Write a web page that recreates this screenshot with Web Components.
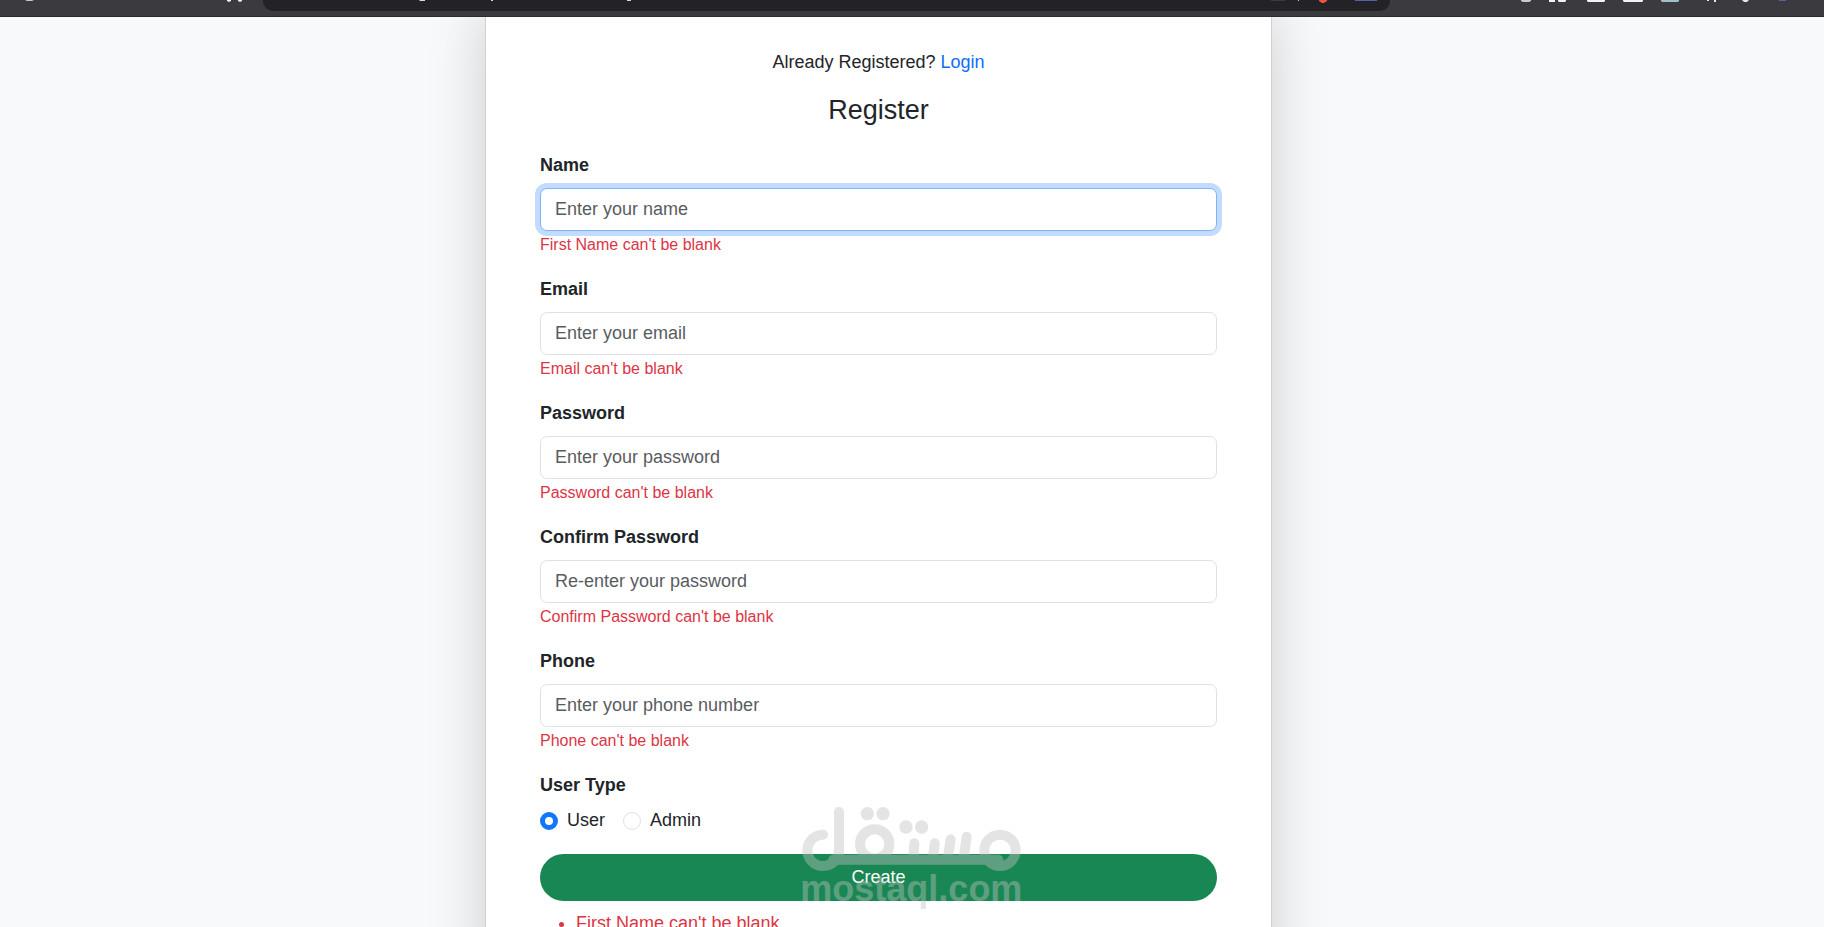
<!DOCTYPE html>
<html lang="en">
<head>
<meta charset="utf-8">
<title>Register</title>
<style>
  body {
    margin: 0;
    height: 100vh;
    overflow: hidden;
    background: #f8f9fb;
    color: #212529;
    font: 18px/27px "Liberation Sans", Arial, sans-serif;
  }
</style>
</head>
<body>
<browser-bar></browser-bar>
<register-page></register-page>

<script>
class BrowserBar extends HTMLElement {
  constructor() {
    super();
    this.attachShadow({ mode: 'open' });
  }

  connectedCallback() {
    this.shadowRoot.innerHTML = `
      <style>
        :host {
          display: flex;
          position: relative;
          z-index: 1;
          height: 16px;
          background: #3b3a3f;
          border-bottom: 1px solid #2b2a30;
        }
        svg { display: block; height: 11px; }
        .nav { width: 263px; }
        .address {
          display: flex;
          justify-content: space-between;
          flex: 1;
          height: 11px;
          background: #232227;
          border-radius: 0 0 10px 10px;
        }
        .tools { width: 434px; }
      </style>
      <svg class="nav" viewBox="0 0 263 11">
        <path d="M25 0h9l-2 1h-5z" fill="#b9cdd4"/>
        <path d="M227 0h4v1l-2 1-2-1zM238 0h4v1l-2 1-2-1z" fill="#f2f2f2"/>
      </svg>
      <div class="address">
        <svg width="380" viewBox="263 0 380 11">
          <path d="M419 0h6v1h-5zM491 0h2v1h-2zM627 0h4v1h-4z" fill="#d5d9dc"/>
        </svg>
        <svg width="130" viewBox="1260 0 130 11">
          <path d="M1271 0h14v1h-14z" fill="#3b3a3f"/>
          <path d="M1298 0h1v1h-1z" fill="#c8c8cc"/>
          <path d="M1319 0h8v1l-3 2h-2l-3-2z" fill="#f0553b"/>
          <path d="M1355 0h22v1h-22z" fill="#5661a8"/>
        </svg>
      </div>
      <svg class="tools" viewBox="1390 0 434 11">
        <path d="M1521 0h10v1l-2 1h-6l-2-1z" fill="#c9cbd4"/>
        <path d="M1549 0h6v2h-6zM1558 0h8v1l-1 1h-6l-1-1zM1587 0h18v1l-1 1h-16l-1-1zM1623 0h20v1l-1 1h-18l-1-1z" fill="#f1f2f3"/>
        <path d="M1661 0h18v1l-1 1h-16l-1-1z" fill="#9fbfca"/>
        <path d="M1707 0h2v1h-2zM1714 0h2v2h-2zM1742 0h7l-2 2h-3z" fill="#e3e6e8"/>
        <path d="M1779 0h7v1h-7z" fill="#605da4"/>
      </svg>
    `;
  }
}

class FormField extends HTMLElement {
  constructor() {
    super();
    this.attachShadow({ mode: 'open' });
  }

  connectedCallback() {
    const label = this.getAttribute('label');
    const type = this.getAttribute('type') || 'text';
    const placeholder = this.getAttribute('placeholder');
    const active = this.hasAttribute('active') ? 'active' : '';

    this.shadowRoot.innerHTML = `
      <style>
        :host { display: block; margin-bottom: 19px; }
        label { display: block; margin-bottom: 9px; font-weight: bold; }
        input {
          display: block;
          box-sizing: border-box;
          width: 100%;
          height: 43px;
          padding: 0 14px;
          border: 1px solid #dee2e6;
          border-radius: 7px;
          background: #fff;
          color: inherit;
          font: inherit;
          outline: 0;
        }
        input::placeholder { color: #595c5f; opacity: 1; }
        input.active, input:focus {
          border-color: #7fb4fb;
          box-shadow: 0 0 0 5px rgba(13, 110, 253, .25);
        }
        .error { margin-top: 2px; font-size: 16px; line-height: 24px; color: #dc3545; }
      </style>
      <label for="field">${label}</label>
      <input id="field" class="${active}" type="${type}" placeholder="${placeholder}">
      <div class="error"><slot></slot></div>
    `;
  }
}

class RadioGroup extends HTMLElement {
  constructor() {
    super();
    this.attachShadow({ mode: 'open' });
  }

  connectedCallback() {
    const options = this.getAttribute('options').split(',');
    const value = this.getAttribute('value');

    this.shadowRoot.innerHTML = `
      <style>
        :host { display: block; margin-bottom: 20px; }
        fieldset { margin: 0; padding: 0; border: 0; min-width: 0; }
        legend { padding: 0; margin-bottom: 8px; font-weight: bold; }
        .options { display: flex; gap: 18px; }
        label { display: flex; align-items: center; gap: 9px; }
        input {
          appearance: none;
          box-sizing: border-box;
          width: 18px;
          height: 18px;
          margin: 0;
          border: 1px solid #dee2e6;
          border-radius: 50%;
          background: #fff;
        }
        input:checked { border: 5px solid #1374fd; }
      </style>
      <fieldset>
        <legend>${this.getAttribute('label')}</legend>
        <div class="options">
          ${options
            .map(
              (option) => `
              <label>
                <input type="radio" name="type" value="${option}" ${option === value ? 'checked' : ''}>
                ${option}
              </label>
            `
            )
            .join('')}
        </div>
      </fieldset>
    `;
  }
}

class SubmitButton extends HTMLElement {
  constructor() {
    super();
    this.attachShadow({ mode: 'open' });
  }

  connectedCallback() {
    this.shadowRoot.innerHTML = `
      <style>
        :host { display: block; }
        button {
          display: block;
          width: 100%;
          height: 47px;
          padding: 0;
          border: 0;
          border-radius: 24px;
          background: #198754;
          color: #fff;
          font: inherit;
        }
      </style>
      <button type="button"><slot></slot></button>
    `;
  }
}

// Translucent mark laid over the bottom of the form
class WaterMark extends HTMLElement {
  constructor() {
    super();
    this.attachShadow({ mode: 'open' });
  }

  connectedCallback() {
    this.shadowRoot.innerHTML = `
      <style>
        :host { display: block; opacity: .42; pointer-events: none; color: #c1c1c1; }
        svg { display: block; width: 260px; height: 137px; }
        text { font: bold 108px "Liberation Sans", Arial, sans-serif; }
      </style>
      <svg viewBox="0 0 780 411" fill="currentColor">
        <g fill="none" stroke="currentColor" stroke-width="30" stroke-linecap="round">
          <path d="M129 134A47 47 0 0 0 129 228C156 228 177 207 177 182V66"/>
          <path d="M160 209H655"/>
          <circle cx="284" cy="162" r="44"/>
          <path d="M403 160L400 205M464 160L459 205M512 148L503 205M560 140L551 205"/>
          <circle cx="660" cy="181" r="47"/>
        </g>
        <circle cx="262" cy="71" r="20"/>
        <circle cx="309" cy="71" r="20"/>
        <circle cx="378" cy="111" r="20"/>
        <circle cx="425" cy="111" r="20"/>
        <text x="61" y="333">mostaql.com</text>
      </svg>
    `;
  }
}

class RegisterPage extends HTMLElement {
  constructor() {
    super();
    this.attachShadow({ mode: 'open' });
  }

  connectedCallback() {
    this.shadowRoot.innerHTML = `
      <style>
        :host { display: block; padding-right: 67px; }
        .card {
          box-sizing: border-box;
          max-width: 787px;
          min-height: 100vh;
          margin: -24px auto 0;
          padding: 55px 54px;
          background: #fff;
          border: 1px solid #d0d1d2;
          box-shadow: 0 18px 54px rgba(0, 0, 0, .175);
        }
        p { margin: 0 0 18px; text-align: center; }
        a { color: #0d6efd; text-decoration: none; }
        h1 {
          margin: 0 0 26px;
          font-size: 27px;
          font-weight: normal;
          line-height: 32px;
          text-align: center;
        }
        ul { margin: 9px 0 0; padding-left: 36px; color: #dc3545; }
        .actions { position: relative; }
        water-mark { position: absolute; left: 240px; top: -64px; }
      </style>
      <form class="card">
        <p>Already Registered? <a href="#login">Login</a></p>
        <h1>Register</h1>
        <form-field label="Name" placeholder="Enter your name" active>First Name can't be blank</form-field>
        <form-field label="Email" type="email" placeholder="Enter your email">Email can't be blank</form-field>
        <form-field label="Password" type="password" placeholder="Enter your password">Password can't be blank</form-field>
        <form-field label="Confirm Password" type="password" placeholder="Re-enter your password">Confirm Password can't be blank</form-field>
        <form-field label="Phone" type="tel" placeholder="Enter your phone number">Phone can't be blank</form-field>
        <radio-group label="User Type" options="User,Admin" value="User"></radio-group>
        <div class="actions">
          <submit-button>Create</submit-button>
          <water-mark></water-mark>
        </div>
        <ul>
          <li>First Name can't be blank</li>
        </ul>
      </form>
    `;
  }
}

customElements.define('browser-bar', BrowserBar);
customElements.define('form-field', FormField);
customElements.define('radio-group', RadioGroup);
customElements.define('submit-button', SubmitButton);
customElements.define('water-mark', WaterMark);
customElements.define('register-page', RegisterPage);
</script>
</body>
</html>
